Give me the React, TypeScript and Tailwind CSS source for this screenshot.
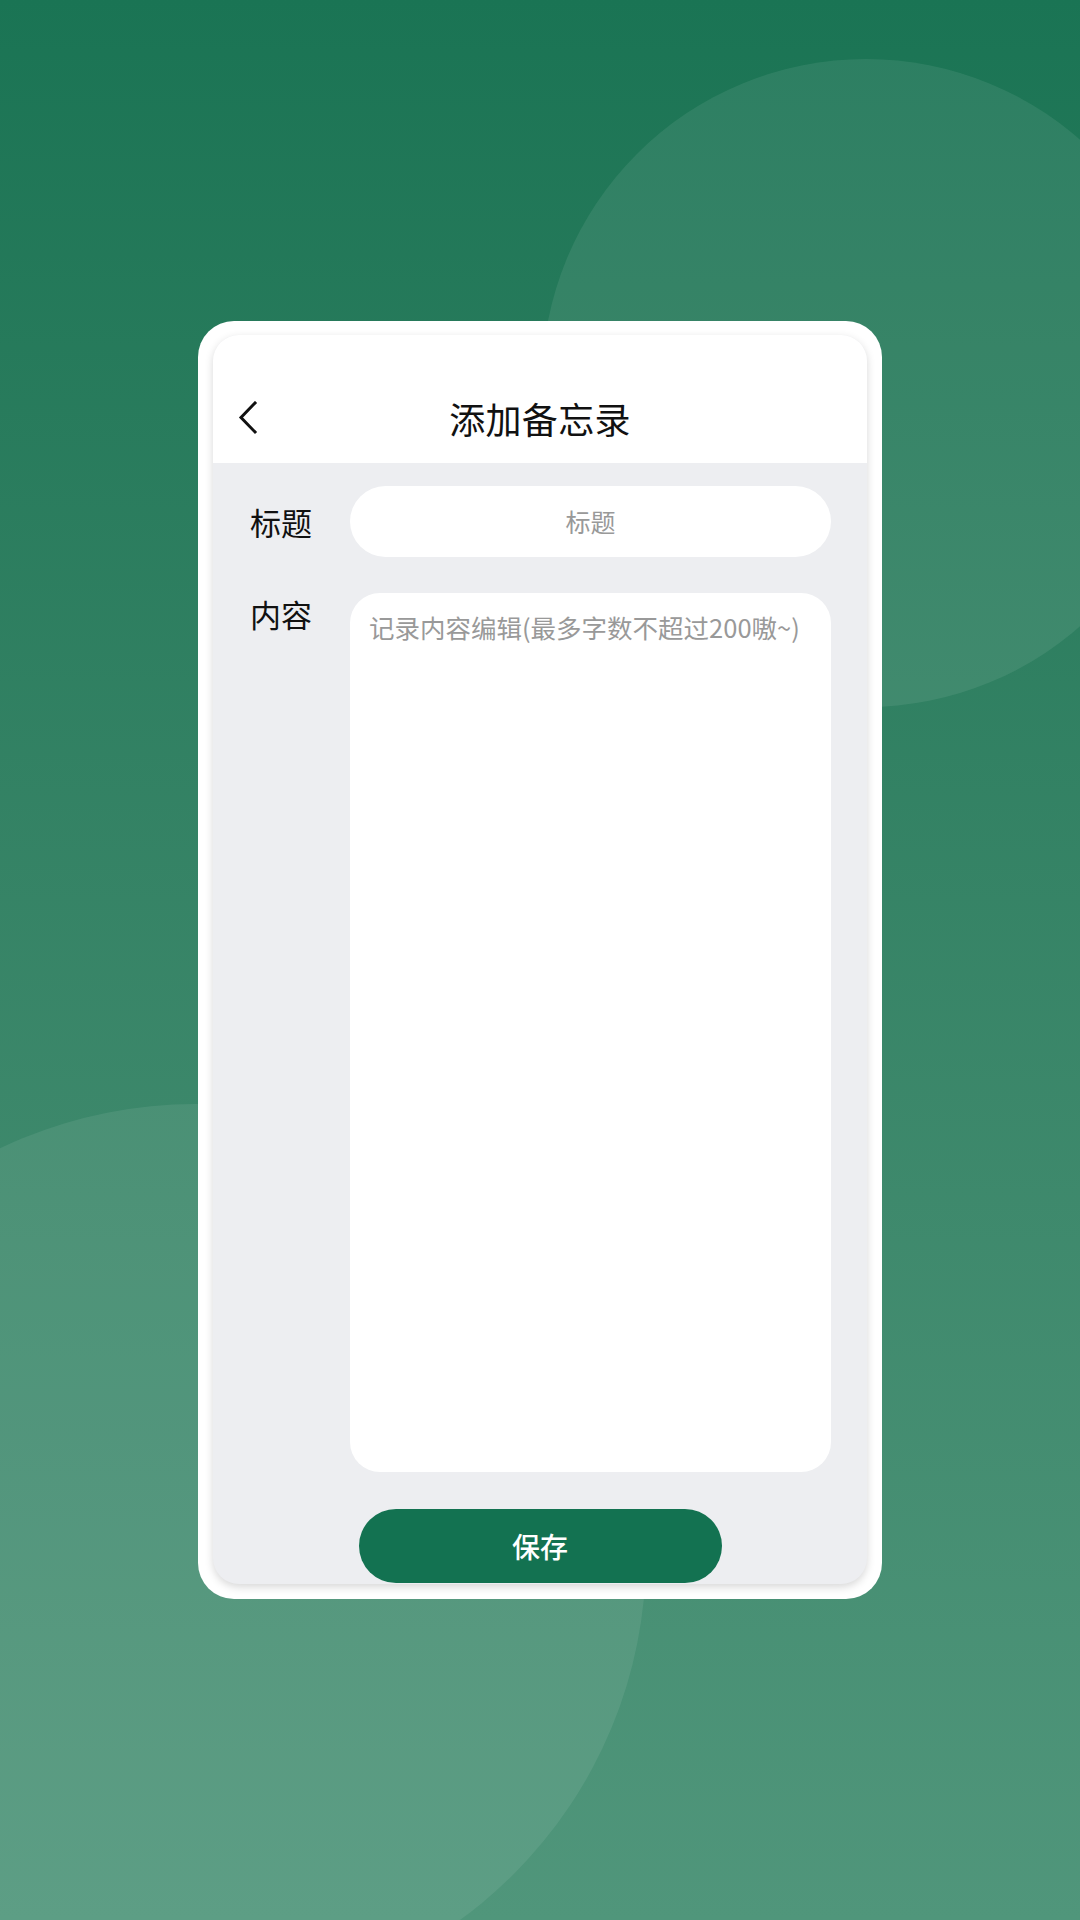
import React from "react";

export default function App() {
  const font = { fontFamily: '"Noto Sans CJK SC", "Noto Sans", sans-serif' };
  return (
    <div
      className="relative w-[1080px] h-[1920px] overflow-hidden bg-gradient-to-b from-[#1a7454] to-[#50967b] flex items-center justify-center"
      style={font}
    >
      <div className="absolute left-[542px] top-[59px] w-[648px] h-[648px] rounded-full bg-white/[0.08]" />
      <div className="absolute left-[-256px] top-[1104px] w-[902px] h-[902px] rounded-full bg-white/[0.08]" />

      <div className="relative w-[684px] h-[1278px] bg-white rounded-[36px] px-[15px] pt-[14px] pb-[15px]">
        <div className="w-[654px] h-[1249px] rounded-[26px] overflow-hidden bg-[#edeef1] shadow-[0_3px_8px_rgba(0,0,0,0.16)] flex flex-col">
          <div className="h-[128px] bg-white pt-[38px] grid grid-cols-[1fr_auto_1fr] items-center">
            <div className="pl-[25px] flex items-center">
              <svg width="22" height="34" viewBox="0 0 22 34" fill="none">
                <path d="M17 2 L3 16.5 L17 31" stroke="#111" strokeWidth="3" strokeLinecap="square" strokeLinejoin="miter" />
              </svg>
            </div>
            <div className="text-[36px] leading-[48px] text-[#111] tracking-[0.3px]">添加备忘录</div>
            <div />
          </div>

          <div className="flex flex-col pt-[23px] pl-[37px] pr-[36px]">
            <div className="flex items-center">
              <div className="w-[100px] text-[31px] leading-[42px] text-[#111]">标题</div>
              <div className="flex-1 h-[71px] rounded-full bg-white flex items-center justify-center text-[25px] text-[#999]">
                标题
              </div>
            </div>

            <div className="flex items-start mt-[36px]">
              <div className="w-[100px] text-[31px] leading-[42px] text-[#111]">内容</div>
              <div className="flex-1 h-[879px] rounded-[30px] bg-white pl-[19px] pr-[12px] pt-[16px] text-[25.5px] leading-[36px] text-[#999] whitespace-nowrap">
                记录内容编辑(最多字数不超过200嗷~)
              </div>
            </div>

            <div className="flex justify-center mt-[37px] pr-[1px]">
              <div className="w-[363px] h-[74px] rounded-full bg-[#137251] flex items-center justify-center text-white text-[28px] font-medium">
                保存
              </div>
            </div>
          </div>
        </div>
      </div>
    </div>
  );
}
